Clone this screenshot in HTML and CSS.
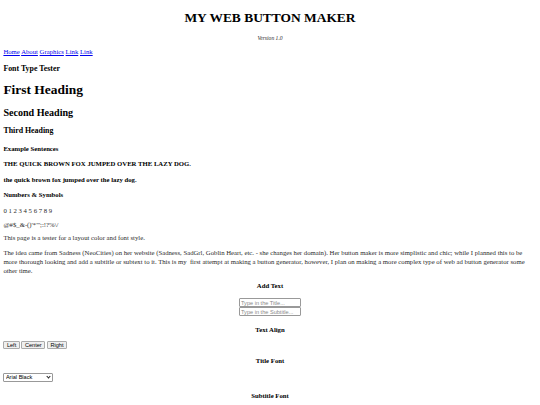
FILE: index.html
```html
<!DOCTYPE html>
<html>
<head>
<meta charset="utf-8">
<title>My Web Button Maker</title>
<link rel="stylesheet" href="styles.css">
</head>
<body>
<header class="site-header">
  <h1 class="site-title">MY WEB BUTTON MAKER</h1>
  <p class="version">Version 1.0</p>
</header>
<nav class="nav">
  <a href="#">Home</a> <a href="#">About</a> <a href="#">Graphics</a> <a href="#">Link</a> <a href="#">Link</a>
</nav>
<main class="content">
  <h4 class="intro-label">Font Type Tester</h4>
  <h1 class="h-first">First Heading</h1>
  <h2 class="h-second">Second Heading</h2>
  <h3 class="h-third">Third Heading</h3>
  <h4 class="label">Example Sentences</h4>
  <h4 class="label">THE QUICK BROWN FOX JUMPED OVER THE LAZY DOG.</h4>
  <h4 class="label">the quick brown fox jumped over the lazy dog.</h4>
  <h4 class="label">Numbers &amp; Symbols</h4>
  <p class="text">0 1 2 3 4 5 6 7 8 9</p>
  <p class="text">@#$_&amp;-()'*"';:!?%\/</p>
  <p class="text">This page is a tester for a layout color and font style.</p>
  <p class="text para">The idea came from Sadness (NeoCities) on her website (Sadness, SadGrl, Goblin Heart, etc. - she changes her domain). Her button maker is more simplistic and chic; while I planned this to be more thorough looking and add a subtitle or subtext to it. This is my&nbsp; first attempt at making a button generator, however, I plan on making a more complex type of web ad button generator some other time.</p>

  <section class="maker">
    <h4 class="maker-label first">Add Text</h4>
    <div class="inputs">
      <input class="field" type="text" placeholder="Type in the Title...">
      <input class="field" type="text" placeholder="Type in the Subtitle...">
    </div>
    <h4 class="maker-label after-inputs">Text Align</h4>
    <div class="align-row">
      <button class="btn">Left</button>
      <button class="btn">Center</button>
      <button class="btn">Right</button>
    </div>
    <h4 class="maker-label spaced">Title Font</h4>
    <div class="select-row">
      <span class="select-wrap">
        <select class="font-select">
          <option>Arial Black</option>
          <option>Arial</option>
          <option>Times New Roman</option>
        </select>
      </span>
    </div>
    <h4 class="maker-label last">Subtitle Font</h4>
  </section>
</main>
</body>
</html>
```
FILE: styles.css
```css
html { background: #fff; }
body {
  margin: 3.4px;
  font-family: "Liberation Serif", "Times New Roman", serif;
  font-size: 6.72px;
  color: #2a2a2a;
}
.site-header { text-align: center; }
.site-title {
  font-size: 13.44px;
  margin: 7px 0 9px;
  color: #000;
}
.version {
  font-style: italic;
  font-size: 5.6px;
  margin: 5.7px 0 6.7px;
}
.nav a { color: #0000ee; }
.intro-label {
  font-size: 7.86px;
  margin: 8.6px 0 9px;
  color: #000;
}
.label {
  font-size: 6.72px;
  margin: 8.6px 0;
  color: #000;
}
.h-first { font-size: 13.44px; margin: 9px 0; color: #000; }
.h-second { font-size: 10.08px; margin: 8.4px 0; color: #000; }
.h-third { font-size: 7.86px; margin: 7.86px 0 9.6px; color: #000; }
.label + .label { margin-top: 7.6px; }
.text { margin: 6.72px 0; }
.para { line-height: 9px; margin-top: 7px; }
.maker-label {
  text-align: center;
  font-size: 6.72px;
  margin: 8.9px 0;
  color: #000;
}
.maker-label.first { margin-top: 3.4px; }
.maker-label.after-inputs { margin-top: 9.5px; }
.maker-label.spaced { margin-top: 7.8px; }
.maker-label.last { margin-top: 10.5px; }
.inputs {
  display: flex;
  flex-direction: column;
  align-items: center;
}
.field {
  font-family: "Liberation Sans", Arial, sans-serif;
  font-size: 5.6px;
  width: 62px;
  height: 9px;
  box-sizing: border-box;
  padding: 0 1px;
  border: 1px solid #999;
  border-radius: 1px;
  margin: 0;
  color: #000;
}
.field::placeholder { color: #888; }
.align-row { display: flex; gap: 1.7px; }
.btn {
  font-family: "Liberation Sans", Arial, sans-serif;
  font-size: 5.6px;
  height: 8px;
  padding: 0 2.5px;
  border: 1px solid #aaa;
  border-radius: 1px;
  background: #efefef;
  color: #000;
  margin: 0;
}
.select-wrap {
  position: relative;
  display: inline-block;
}
.font-select {
  -webkit-appearance: none;
  appearance: none;
  font-family: "Liberation Sans", Arial, sans-serif;
  font-size: 5.6px;
  width: 50px;
  height: 8.5px;
  padding: 0 1.5px;
  border: 1px solid #999;
  border-radius: 1px;
  background: #fff;
  color: #000;
  margin: 0;
}
.select-wrap::after {
  content: "";
  position: absolute;
  right: 3px;
  top: 2px;
  width: 2px;
  height: 2px;
  border-right: 1px solid #222;
  border-bottom: 1px solid #222;
  transform: rotate(45deg);
  pointer-events: none;
}
```
